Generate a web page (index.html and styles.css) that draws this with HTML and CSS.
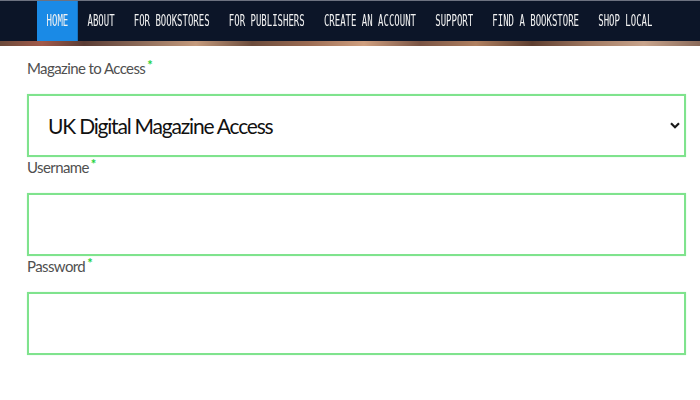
FILE: index.html
```html
<!DOCTYPE html>
<html lang="en">
<head>
<meta charset="utf-8">
<title>Magazine Access</title>
<link rel="stylesheet" href="styles.css">
</head>
<body>
<header class="site-header">
  <nav class="main-nav">
    <ul class="nav-list">
      <li class="nav-item active">HOME</li>
      <li class="nav-item">ABOUT</li>
      <li class="nav-item">FOR BOOKSTORES</li>
      <li class="nav-item">FOR PUBLISHERS</li>
      <li class="nav-item">CREATE AN ACCOUNT</li>
      <li class="nav-item">SUPPORT</li>
      <li class="nav-item">FIND A BOOKSTORE</li>
      <li class="nav-item">SHOP LOCAL</li>
    </ul>
  </nav>
  <div class="hero-strip"></div>
</header>
<form class="access-form">
  <div class="field">
    <label class="field-label">Magazine to Access<span class="req">*</span></label>
    <div class="select-wrap">
      <select class="field-box field-select">
        <option>UK Digital Magazine Access</option>
      </select>
      <svg class="chevron" width="10" height="7" viewBox="0 0 10 7"><path d="M1 1.2 L5 5.2 L9 1.2" fill="none" stroke="#1a1a1a" stroke-width="2.2"/></svg>
    </div>
  </div>
  <div class="field">
    <label class="field-label">Username<span class="req">*</span></label>
    <input class="field-box" type="text">
  </div>
  <div class="field">
    <label class="field-label">Password<span class="req">*</span></label>
    <input class="field-box" type="password">
  </div>
</form>
</body>
</html>
```
FILE: styles.css
```css
html, body {
  margin: 0;
  padding: 0;
  background: #ffffff;
}
body {
  font-family: Lato, "Open Sans", sans-serif;
  width: 700px;
  height: 400px;
  overflow: hidden;
}
.site-header {
  display: flex;
  flex-direction: column;
}
.main-nav {
  height: 41px;
  background: #0c1528;
  border-top: 1px solid #6d7280;
  box-sizing: border-box;
  padding-left: 37px;
  overflow: hidden;
}
.nav-list {
  list-style: none;
  margin: 0;
  padding: 0;
  display: flex;
  height: 100%;
  transform: scaleX(0.6);
  transform-origin: left center;
}
.nav-item {
  font-family: "DejaVu Sans Mono", monospace;
  font-size: 15px;
  color: #f2f2f2;
  padding: 0 16px;
  display: flex;
  align-items: center;
  white-space: nowrap;
}
.nav-item.active {
  background: #1a8ae6;
  margin-top: -1px;
}
.hero-strip {
  height: 5px;
  background: linear-gradient(90deg, #6b4a3a 0%, #a35a4a 6%, #5a3c34 12%, #8c6a58 20%, #c49a7c 28%, #6c4c3c 36%, #9b6b52 44%, #d0a080 52%, #7a5444 60%, #b08060 68%, #5e3e30 76%, #a07860 84%, #c8a48c 92%, #8a6a5a 100%);
  filter: blur(0.6px);
}
.access-form {
  padding: 12px 0 0 27px;
  width: 659px;
  display: flex;
  flex-direction: column;
}
.field {
  display: flex;
  flex-direction: column;
}
.field-label {
  font-size: 15px;
  line-height: 20px;
  color: #505050;
  margin-bottom: 16px;
  letter-spacing: -0.6px;
}
.req {
  color: #22d23a;
  font-size: 13px;
  font-weight: 700;
  vertical-align: top;
  line-height: 14px;
  margin-left: 2px;
}
.field-box {
  box-sizing: border-box;
  width: 659px;
  height: 63px;
  border: 2px solid #7fe38d;
  background: #ffffff;
  outline: none;
  margin: 0;
  padding: 0 19px;
  font-family: Lato, "Open Sans", sans-serif;
  box-shadow: 0 0 1px #bff2c6;
}
.select-wrap {
  position: relative;
}
.field-select {
  appearance: none;
  -webkit-appearance: none;
  font-size: 21px;
  letter-spacing: -1.2px;
  color: #111111;
  border-radius: 0;
}
.chevron {
  position: absolute;
  right: 6px;
  top: 28px;
}
```
